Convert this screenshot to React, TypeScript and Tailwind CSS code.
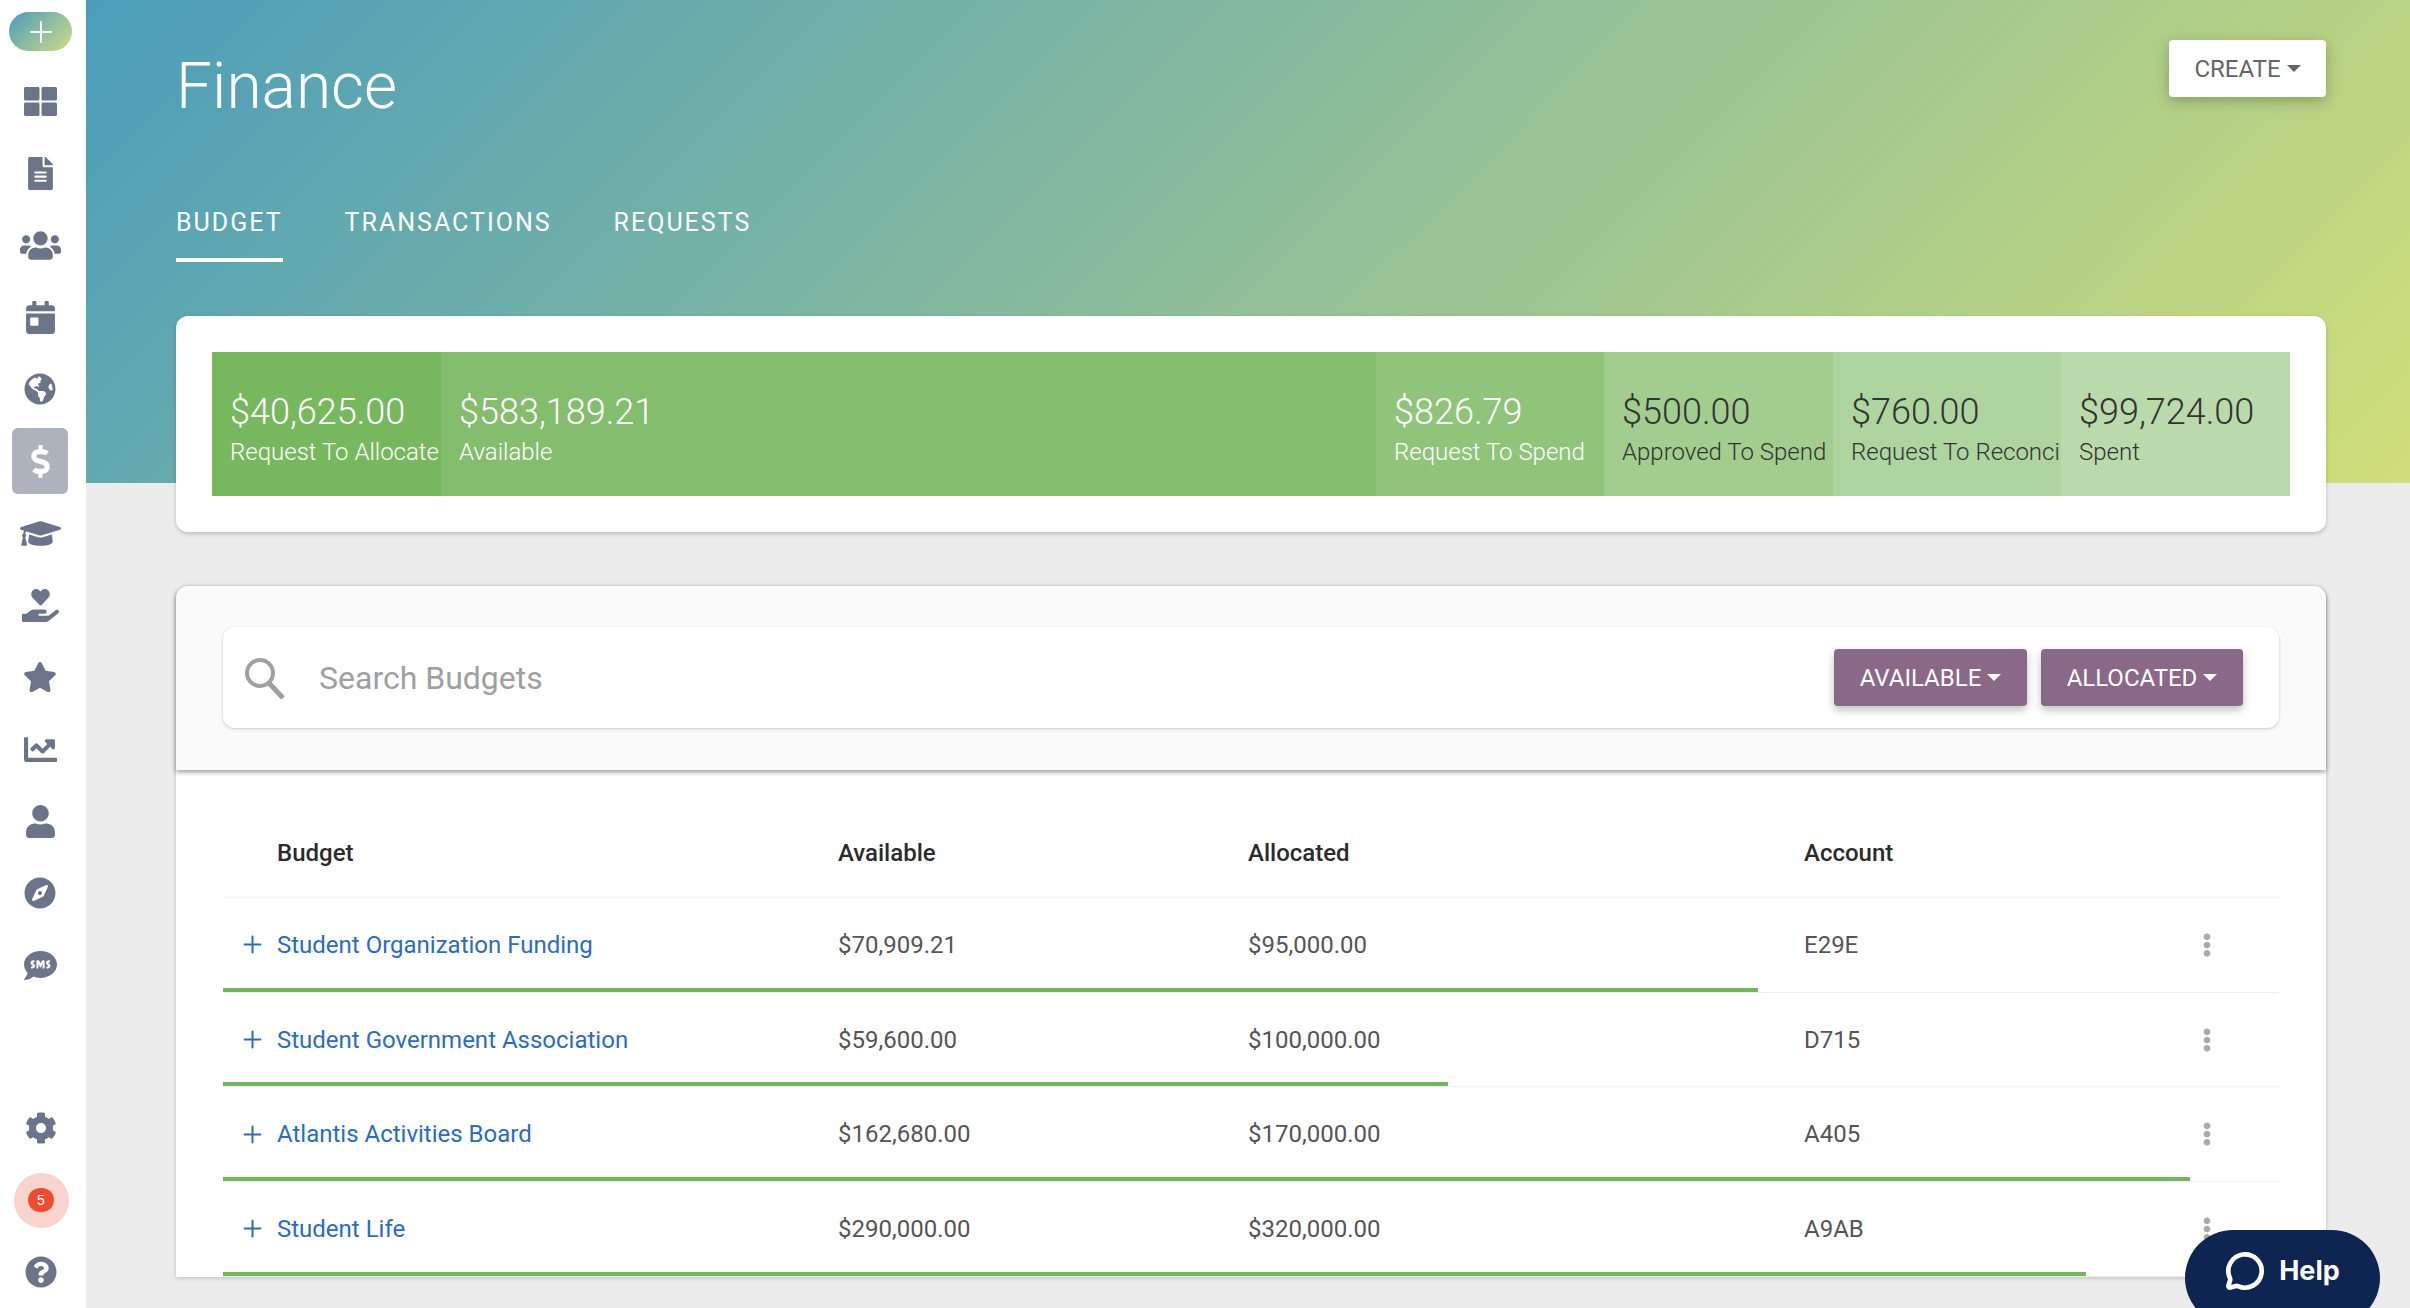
import { MessageCircle, Plus } from "lucide-react";
import {
  FaCalendarDay,
  FaChartLine,
  FaCog,
  FaCompass,
  FaDollarSign,
  FaEllipsisV,
  FaFileAlt,
  FaGlobeAmericas,
  FaGraduationCap,
  FaHandHoldingHeart,
  FaQuestionCircle,
  FaSms,
  FaStar,
  FaThLarge,
  FaUser,
  FaUsers,
} from "react-icons/fa";

const navItems = [
  { icon: FaThLarge, size: 33 },
  { icon: FaFileAlt, size: 33 },
  { icon: FaUsers, size: 41 },
  { icon: FaCalendarDay, size: 33 },
  { icon: FaGlobeAmericas, size: 32 },
  { icon: FaDollarSign, size: 33, active: true },
  { icon: FaGraduationCap, size: 41 },
  { icon: FaHandHoldingHeart, size: 37 },
  { icon: FaStar, size: 34 },
  { icon: FaChartLine, size: 33 },
  { icon: FaUser, size: 33 },
  { icon: FaCompass, size: 32 },
  { icon: FaSms, size: 33 },
];

const stats = [
  { value: "$40,625.00", label: "Request To Allocate", bg: "bg-[#77b85f]", text: "text-white", width: "w-[229px]" },
  { value: "$583,189.21", label: "Available", bg: "bg-[#85bd6e]", text: "text-white", width: "flex-1" },
  { value: "$826.79", label: "Request To Spend", bg: "bg-[#91c47b]", text: "text-white", width: "w-[228px]" },
  { value: "$500.00", label: "Approved To Spend", bg: "bg-[#a2cd8f]", text: "text-[#333333]", width: "w-[229px]" },
  { value: "$760.00", label: "Request To Reconcile", bg: "bg-[#aed4a0]", text: "text-[#333333]", width: "w-[228px]" },
  { value: "$99,724.00", label: "Spent", bg: "bg-[#bbdaac]", text: "text-[#333333]", width: "w-[229px]" },
];

const budgets = [
  { name: "Student Organization Funding", available: 70909.21, allocated: 95000, account: "E29E" },
  { name: "Student Government Association", available: 59600, allocated: 100000, account: "D715" },
  { name: "Atlantis Activities Board", available: 162680, allocated: 170000, account: "A405" },
  { name: "Student Life", available: 290000, allocated: 320000, account: "A9AB" },
];

const money = (n: number) =>
  "$" + n.toLocaleString("en-US", { minimumFractionDigits: 2, maximumFractionDigits: 2 });

const Caret = ({ className }: { className: string }) => (
  <span className={`ml-[6px] inline-block h-0 w-0 border-x-[7px] border-t-[7px] border-x-transparent ${className}`} />
);

const Sidebar = () => (
  <aside className="flex h-[1308px] w-[86px] shrink-0 flex-col items-stretch overflow-hidden bg-white pt-3 text-[#6c7489]">
    <div className="ml-[9px] flex h-[63px] w-[63px] items-center justify-center rounded-full bg-[linear-gradient(135deg,#4b9dbb,#cfdc84)] text-white">
      <Plus size={34} strokeWidth={1.4} />
    </div>
    <nav className="mt-[14px] flex flex-col">
      {navItems.map(({ icon: Icon, size, active }, i) => (
        <div key={i} className="flex h-[72px] items-center justify-center pr-[6px]">
          {active ? (
            <div className="flex h-[66px] w-[56px] items-center justify-center rounded-md bg-[#adb2bd] text-white">
              <Icon size={size} />
            </div>
          ) : (
            <Icon size={size} />
          )}
        </div>
      ))}
    </nav>
    <div className="mt-[91px] flex flex-col">
      <div className="flex h-[72px] items-center justify-center pr-[4px]">
        <FaCog size={32} />
      </div>
      <div className="flex h-[72px] items-center justify-center pr-[4px]">
        <div className="flex h-[55px] w-[55px] items-center justify-center rounded-full bg-[#f9d3cd]">
          <span className="flex h-[24px] w-[26px] items-center justify-center rounded-full bg-[#ee4b2f] font-['Liberation_Sans',sans-serif] text-[14px] text-white">
            5
          </span>
        </div>
      </div>
      <div className="flex h-[72px] items-center justify-center pr-[4px]">
        <FaQuestionCircle size={32} />
      </div>
    </div>
  </aside>
);

const App = () => {
  return (
    <div className="flex h-[1308px] w-full overflow-hidden bg-[#ececec] font-['Roboto',sans-serif]">
      <Sidebar />
      <main className="relative min-w-0 flex-1">
        <div className="absolute inset-x-0 top-0 h-[483px] bg-[linear-gradient(135deg,#4b9dbb,#d0de78)]" />

        <div className="relative pl-[90px] pr-[84px]">
          <div className="flex items-start justify-between pt-[40px]">
            <h1 className="text-[64px] leading-[94px] font-light text-white">Finance</h1>
            <button className="flex h-[57px] w-[157px] items-center justify-center rounded-[4px] bg-white text-[24px] text-[#666666] shadow-[0_4px_14px_rgba(0,0,0,0.25)]">
              CREATE
              <Caret className="border-t-[#666666]" />
            </button>
          </div>

          <div className="mt-[54px] flex gap-[62px] text-[25px] tracking-[2px] text-white">
            <div className="flex h-[74px] items-center border-b-4 border-white">BUDGET</div>
            <div className="flex h-[74px] items-center border-b-4 border-transparent">TRANSACTIONS</div>
            <div className="flex h-[74px] items-center border-b-4 border-transparent">REQUESTS</div>
          </div>

          <section className="mt-[54px] rounded-[12px] bg-white p-[36px] shadow-[0_2px_4px_rgba(0,0,0,0.2)]">
            <div className="flex h-[144px]">
              {stats.map((s) => (
                <div key={s.label} className={`overflow-hidden pl-[18px] pt-[38px] whitespace-nowrap ${s.bg} ${s.text} ${s.width}`}>
                  <div className="text-[36px] leading-[44px] font-light">{s.value}</div>
                  <div className="text-[24px] leading-[36px] font-light">{s.label}</div>
                </div>
              ))}
            </div>
          </section>

          <section className="mt-[54px] rounded-t-[12px] bg-white shadow-[0_1px_4px_rgba(0,0,0,0.2)]">
            <div className="h-[184px] rounded-t-[12px] bg-[#fafafa] px-[47px] pt-[41px] shadow-[0_2px_5px_rgba(0,0,0,0.4)]">
              <div className="flex h-[101px] items-center rounded-[12px] bg-white pl-[21px] pr-[36px] shadow-[0_1px_3px_rgba(0,0,0,0.2)]">
                <svg width="42" height="42" viewBox="0 0 42 42" fill="none" stroke="#a0a0a0" className="shrink-0">
                  <circle cx="16" cy="16" r="13" strokeWidth="4" />
                  <path d="M25 26l14 15" strokeWidth="5" />
                </svg>
                <span className="ml-[33px] flex-1 text-[32px] text-[#a0a0a0]">Search Budgets</span>
                <button className="flex h-[57px] w-[193px] items-center justify-center rounded-[4px] bg-[#8a6888] text-[24px] text-white shadow-[0_4px_8px_rgba(0,0,0,0.25)]">
                  AVAILABLE
                  <Caret className="border-t-white" />
                </button>
                <button className="ml-[14px] flex h-[57px] w-[202px] items-center justify-center rounded-[4px] bg-[#8a6888] text-[24px] text-white shadow-[0_4px_8px_rgba(0,0,0,0.25)]">
                  ALLOCATED
                  <Caret className="border-t-white" />
                </button>
              </div>
            </div>

            <div className="px-[47px] text-[24px]">
              <div className="grid h-[128px] grid-cols-[615px_410px_556px_1fr] items-end border-b border-[#eeeeee] pb-[26px] font-medium text-[#2b2b2b]">
                <div className="pl-[54px]">Budget</div>
                <div>Available</div>
                <div>Allocated</div>
                <div>Account</div>
              </div>

              {budgets.map((b) => (
                <div
                  key={b.account}
                  className="relative grid h-[94.7px] grid-cols-[615px_410px_556px_391px_auto] items-center border-b border-[#eeeeee] text-[#555555]"
                >
                  <a className="flex items-center pl-[16px] text-[#2a6cc4]">
                    <Plus size={27} strokeWidth={1.8} className="mr-[11px]" />
                    {b.name}
                  </a>
                  <div>{money(b.available)}</div>
                  <div>{money(b.allocated)}</div>
                  <div>{b.account}</div>
                  <FaEllipsisV size={24} className="text-[#aaaaaa]" />
                  <div
                    className="absolute bottom-0 left-0 h-[4px] bg-[#72b55c]"
                    style={{ width: `${(b.available / b.allocated) * 100}%` }}
                  />
                </div>
              ))}
            </div>
          </section>
        </div>

        <button className="absolute right-[30px] top-[1230px] flex h-[96px] w-[195px] items-center justify-center gap-[14px] rounded-full bg-[#0d2550] pb-[14px] font-['Inter',sans-serif] text-[27px] font-bold text-white">
          <MessageCircle size={40} strokeWidth={2.8} />
          Help
        </button>
      </main>
    </div>
  );
};

export default App;
